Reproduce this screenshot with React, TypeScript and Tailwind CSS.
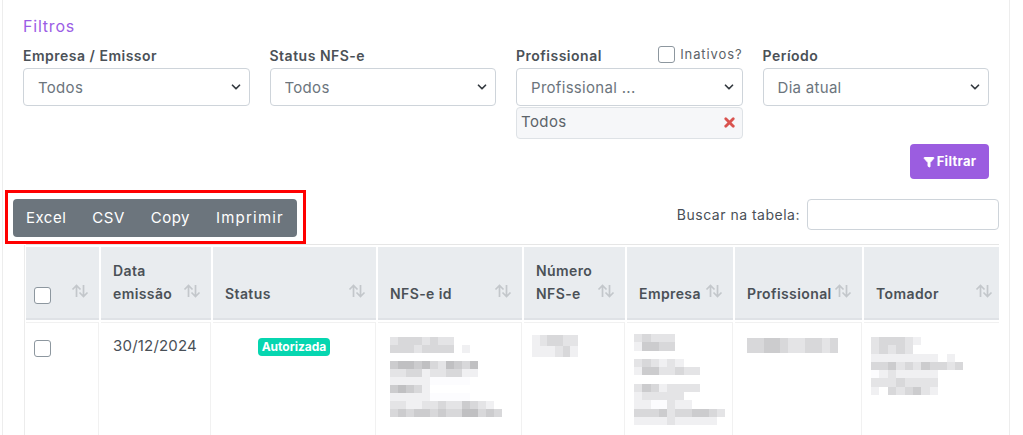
import { ChevronDown, Filter, X } from "lucide-react";

const selects = [
  { label: "Empresa / Emissor", value: "Todos" },
  { label: "Status NFS-e", value: "Todos" },
  { label: "Profissional", value: "Profissional ..." },
  { label: "Período", value: "Dia atual" },
];

const columns = [
  { label: "", w: "w-[73px]" },
  { label: "Data emissão", w: "w-[110px]" },
  { label: "Status", w: "w-[163px]" },
  { label: "NFS-e id", w: "w-[144px]" },
  { label: "Número NFS-e", w: "w-[101px]" },
  { label: "Empresa", w: "w-[106px]" },
  { label: "Profissional", w: "w-[127px]" },
  { label: "Tomador", w: "w-[139px]" },
];

// blurred data, one digit per pixel block: 0 = white, 9 = darkest
const blurId = [
  "23332322",
  "33323333 1",
  "",
  "45545325435",
  "22331223311",
  "1111100000",
  "45431",
  "1111100000",
  "2211223224321",
  "34344343355343",
];
const blurNumero = ["123322", "111231"];
const blurEmpresa = ["23222", "14433", "", "232121", "14422322", "", "24312222", "122222", "1100211", "33342334432", "1111211111"];
const blurProf = ["33443223323"];
const blurTomador = ["233321", "23232", "11111111 1", "33423243323", "01211111", "22232222", "1 323421"];

function Mosaic({ rows, cw, ch }: { rows: string[]; cw: number; ch: number }) {
  return (
    <div className="flex flex-col">
      {rows.map((row, i) => (
        <div className="flex" key={i} style={{ height: ch }}>
          {row.split("").map((c, j) => {
            const level = c === " " ? 255 : 252 - Number(c) * 12;
            return (
              <span
                key={j}
                style={{ width: cw, background: `rgb(${level},${level},${level + 2})` }}
              />
            );
          })}
        </div>
      ))}
    </div>
  );
}

function SortIcon() {
  return (
    <svg width="18" height="14" viewBox="0 0 18 14" fill="none" stroke="#c3c7cb" strokeWidth="1.7">
      <path d="M5.5 13V1.5M1.5 5.5l4-4 4 4" />
      <path d="M12.5 1v11.5M8.5 8.5l4 4 4-4" />
    </svg>
  );
}

function Check({ className = "" }: { className?: string }) {
  return (
    <span className={`block w-[17px] h-[17px] rounded-[3px] border border-[#8d979f] bg-white ${className}`} />
  );
}

export default function App() {
  return (
    <div className="w-[1023px] h-[435px] overflow-hidden bg-white font-[Inter,sans-serif] text-[#495057]">
      <div className="ml-[2px] w-[1008px] h-[435px] border-x border-[#ededed] relative">
        <div className="pl-5 pr-5 pt-[16px]">
          <div className="text-[16px] leading-[20px] text-[#9b5de5] tracking-[0.8px]">Filtros</div>
          <div className="grid grid-cols-4 gap-x-5 mt-[10px]">
            {selects.map((s, i) => (
              <div key={s.label}>
                <div className="flex justify-between items-start h-[22px]">
                  <span className="text-[14px] leading-[20px] font-semibold tracking-[0.5px] text-[#4b5157]">{s.label}</span>
                  {i === 2 && (
                    <span className="flex items-center gap-[5px] text-[13px] leading-[17px] tracking-[0.9px] text-[#5c6369]">
                      <Check />
                      Inativos?
                    </span>
                  )}
                </div>
                <div className="relative">
                  <select
                    defaultValue={s.value}
                    className="block w-full h-[38px] appearance-none rounded-[4px] border border-[#ced4da] bg-white pl-[14px] pt-[2px] text-[15px] tracking-[0.3px] text-[#6c757d]"
                  >
                    <option>{s.value}</option>
                  </select>
                  <ChevronDown className="absolute right-[7px] top-[12px] text-[#343a40]" size={14} strokeWidth={3} />
                </div>
                {i === 2 && (
                  <div className="mt-[1px] h-[32px] flex items-center justify-between rounded-[4px] border border-[#dee2e6] bg-[#f6f7f9] pl-[4px] pr-[5px] pb-[2px] text-[15px] tracking-[0.4px] text-[#5c6369]">
                    Todos
                    <X size={15} strokeWidth={4.5} className="text-[#d9534f]" />
                  </div>
                )}
              </div>
            ))}
          </div>
          <div className="flex justify-end mt-[5px]">
            <button className="flex items-center justify-center gap-[2px] w-[79px] h-[35px] rounded-[4px] bg-[#9b5de0] text-white text-[13px] font-bold tracking-[0.3px]">
              <Filter size={12} fill="white" strokeWidth={2} />
              Filtrar
            </button>
          </div>
        </div>

        <div className="relative flex justify-between items-start pl-[10px] pr-[10px] mt-[20px]">
          <div className="flex items-center gap-[26px] h-[38px] w-[284px] px-[13px] rounded-[4px] bg-[#6c757d] text-white text-[15px] tracking-[0.5px]">
            <span>Excel</span>
            <span>CSV</span>
            <span>Copy</span>
            <span className="tracking-[1.2px]">Imprimir</span>
          </div>
          <div className="flex items-center gap-[7px] text-[14px] tracking-[0.5px]">
            Buscar na tabela:
            <input className="w-[192px] h-[31px] rounded-[4px] border border-[#ced4da] bg-white" />
          </div>
          <div className="absolute left-[2px] -top-[9px] w-[301px] h-[54px] border-[3px] border-[#ff0000]" />
        </div>

        <div className="mt-[7px] ml-[23px] mr-[10px] border-t border-[#e6e6e6] pt-[2px] overflow-hidden">
          <div className="flex gap-[2px] h-[73px] w-[1000px]">
            {columns.map((c, i) => (
              <div
                key={i}
                className={`${c.w} shrink-0 flex items-end justify-between border-b-[2px] border-[#dfe2e6] bg-[#e9ecef] pl-[12px] pr-[10px] pb-[13px] text-[14px] leading-[23px] font-semibold tracking-[0.4px] text-[#4b5157]`}
              >
                {i === 0 ? <Check className="mb-[1px] -ml-[4px]" /> : <span className={i === 1 || i === 4 ? "w-[70px]" : ""}>{c.label}</span>}
                <span className="mb-[7px] shrink-0"><SortIcon /></span>
              </div>
            ))}
          </div>
          <div className="flex gap-[2px] mt-[2px] w-[1000px] h-[113px]">
            <div className="w-[73px] shrink-0 border-r border-t border-[#f1f1f1] pt-[17px] pl-[8px]"><Check /></div>
            <div className="w-[110px] shrink-0 border-r border-t border-[#f1f1f1] pt-[12px] pl-[12px] text-[15px] leading-[22px] tracking-[0.2px]">30/12/2024</div>
            <div className="w-[163px] shrink-0 border-r border-t border-[#f1f1f1] pt-[15px] pl-[45px]">
              <span className="flex items-center justify-center w-[72px] h-[18px] rounded-[4px] bg-[#06d6b0] text-white text-[12px] font-bold">Autorizada</span>
            </div>
            <div className="w-[144px] shrink-0 border-r border-t border-[#f1f1f1] pt-[14px] pl-[12px]"><Mosaic rows={blurId} cw={8} ch={8} /></div>
            <div className="w-[101px] shrink-0 border-r border-t border-[#f1f1f1] pt-[12px] pl-[8px]"><Mosaic rows={blurNumero} cw={7.7} ch={11} /></div>
            <div className="w-[106px] shrink-0 border-r border-t border-[#f1f1f1] pt-[11px] pl-[7px]"><Mosaic rows={blurEmpresa} cw={8.3} ch={8.3} /></div>
            <div className="w-[127px] shrink-0 border-r border-t border-[#f1f1f1] pt-[15px] pl-[12px]"><Mosaic rows={blurProf} cw={8.3} ch={15} /></div>
            <div className="w-[139px] shrink-0 border-t border-[#f1f1f1] pt-[14px] pl-[7px]"><Mosaic rows={blurTomador} cw={8.4} ch={8.3} /></div>
          </div>
        </div>
        <div className="absolute left-[21px] top-[245px] bottom-0 w-px bg-[#ececec]" />
      </div>
    </div>
  );
}
